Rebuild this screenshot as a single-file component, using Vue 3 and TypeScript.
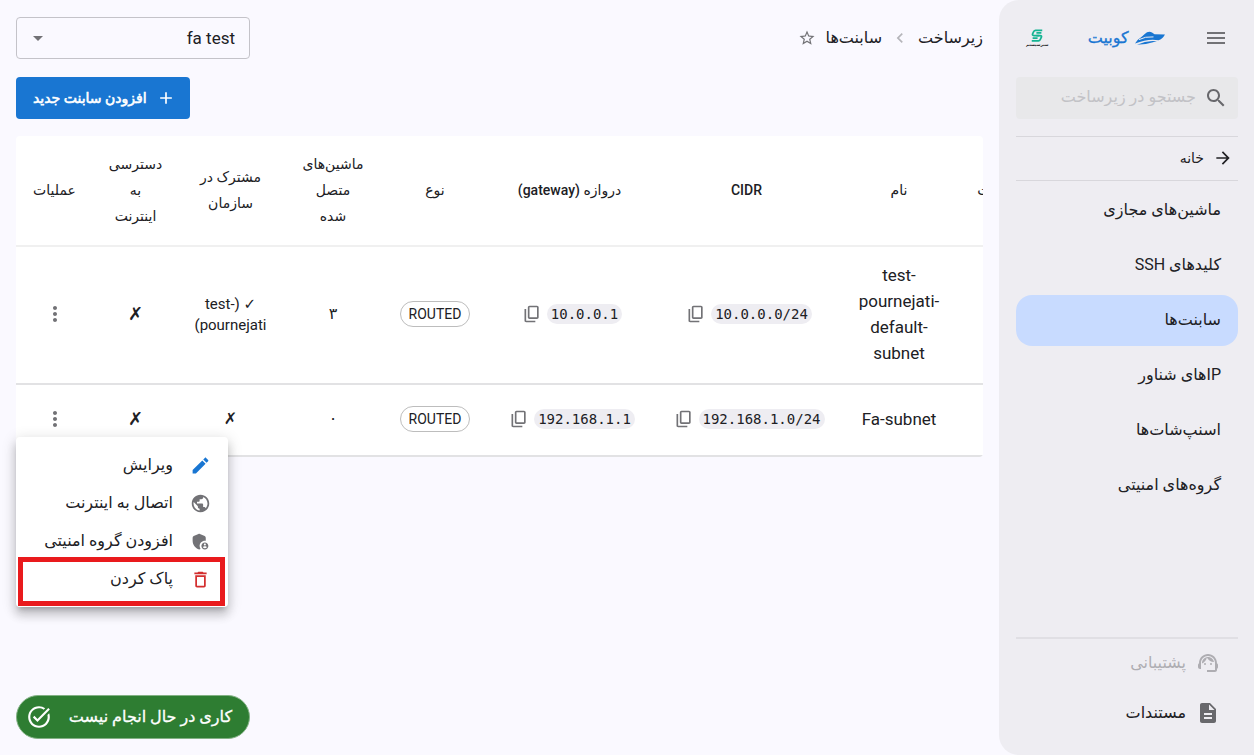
<script setup lang="ts">
import { ref } from 'vue'

interface Subnet {
  name: string
  cidr: string
  gateway: string
  kind: string
  machines: string
  shared: string
  sharedSmall: boolean
  internet: string
}

const icons = {
  menu: 'M3 18h18v-2H3v2zm0-5h18v-2H3v2zm0-7v2h18V6H3z',
  search:
    'M15.5 14h-.79l-.28-.27C15.41 12.59 16 11.11 16 9.5 16 5.91 13.09 3 9.5 3S3 5.91 3 9.5 5.91 16 9.5 16c1.61 0 3.09-.59 4.23-1.57l.27.28v.79l5 4.99L20.49 19l-4.99-5zm-6 0C7.01 14 5 11.99 5 9.5S7.01 5 9.5 5 14 7.01 14 9.5 11.99 14 9.5 14z',
  arrow: 'M12 4l-1.41 1.41L16.17 11H4v2h12.17l-5.58 5.59L12 20l8-8z',
  chevron: 'M15.41 7.41L14 6l-6 6 6 6 1.41-1.41L10.83 12z',
  star: 'M22 9.24l-7.19-.62L12 2 9.19 8.63 2 9.24l5.46 4.73L5.82 21 12 17.27 18.18 21l-1.63-7.03L22 9.24zM12 15.4l-3.76 2.27 1-4.28-3.32-2.88 4.38-.38L12 6.1l1.71 4.04 4.38.38-3.32 2.88 1 4.28L12 15.4z',
  add: 'M19 13h-6v6h-2v-6H5v-2h6V5h2v6h6v2z',
  more: 'M12 8c1.1 0 2-.9 2-2s-.9-2-2-2-2 .9-2 2 .9 2 2 2zm0 2c-1.1 0-2 .9-2 2s.9 2 2 2 2-.9 2-2-.9-2-2-2zm0 6c-1.1 0-2 .9-2 2s.9 2 2 2 2-.9 2-2-.9-2-2-2z',
  copy: 'M9 18q-.825 0-1.413-.588T7 16V4q0-.825.588-1.413T9 2h9q.825 0 1.413.588T20 4v12q0 .825-.588 1.413T18 18H9Zm0-2h9V4H9v12Zm-4 6q-.825 0-1.413-.588T3 20V6h2v14h11v2H5Z',
  edit: 'M3 17.25V21h3.75L17.81 9.94l-3.75-3.75L3 17.25zM20.71 7.04c.39-.39.39-1.02 0-1.41l-2.34-2.34c-.39-.39-1.02-.39-1.41 0l-1.83 1.83 3.75 3.75 1.83-1.83z',
  globe:
    'M12 2C6.48 2 2 6.48 2 12s4.48 10 10 10 10-4.48 10-10S17.52 2 12 2zm-1 17.93c-3.95-.49-7-3.85-7-7.93 0-.62.08-1.21.21-1.79L9 15v1c0 1.1.9 2 2 2v1.93zm6.9-2.54c-.26-.81-1-1.39-1.9-1.39h-1v-3c0-.55-.45-1-1-1H8v-2h2c.55 0 1-.45 1-1V7h2c1.1 0 2-.9 2-2v-.41c2.93 1.19 5 4.06 5 7.41 0 2.08-.8 3.97-2.1 5.39z',
  shield:
    'M17 11c.34 0 .67.04 1 .09V7.58c0-.8-.47-1.52-1.2-1.83l-5.5-2.4c-.51-.22-1.09-.22-1.6 0l-5.5 2.4C3.47 6.07 3 6.79 3 7.58v3.6c0 4.54 3.2 8.79 7.5 9.82.55-.13 1.08-.32 1.6-.55-.69-.98-1.1-2.17-1.1-3.45 0-3.31 2.69-6 6-6zM17 13c-2.21 0-4 1.79-4 4s1.79 4 4 4 4-1.79 4-4-1.79-4-4-4zm0 1.38c.62 0 1.12.51 1.12 1.12s-.51 1.12-1.12 1.12-1.12-.51-1.12-1.12.51-1.12 1.12-1.12zm0 5.37c-.93 0-1.74-.46-2.24-1.17.05-.72 1.51-1.08 2.24-1.08s2.19.36 2.24 1.08c-.5.71-1.31 1.17-2.24 1.17z',
  trash:
    'M6 19c0 1.1.9 2 2 2h8c1.1 0 2-.9 2-2V7H6v12zM8 9h8v10H8V9zm7.5-5l-1-1h-5l-1 1H5v2h14V4h-3.5z',
  done: 'M22 5.18L10.59 16.6l-4.24-4.24 1.41-1.41 2.83 2.83 10-10L22 5.18zm-2.21 5.04c.13.57.21 1.17.21 1.78 0 4.42-3.58 8-8 8s-8-3.58-8-8 3.58-8 8-8c1.58 0 3.04.46 4.28 1.25l1.44-1.44C16.1 2.67 14.13 2 12 2 6.48 2 2 6.48 2 12s4.48 10 10 10 10-4.48 10-10c0-1.19-.22-2.33-.6-3.39l-1.61 1.61z',
  agent:
    'M21 12.22C21 6.73 16.74 3 12 3c-4.69 0-9 3.65-9 9.28-.6.34-1 .98-1 1.72v2c0 1.1.9 2 2 2h1v-6.1c0-3.87 3.13-7 7-7s7 3.13 7 7V19h-8v2h8c1.1 0 2-.9 2-2v-1.22c.59-.31 1-.92 1-1.64v-2.3c0-.7-.41-1.31-1-1.62zM9 12a1 1 0 1 0 0 2 1 1 0 0 0 0-2zM15 12a1 1 0 1 0 0 2 1 1 0 0 0 0-2zM18 11.03C17.52 8.18 15.04 6 12.05 6c-3.03 0-6.29 2.51-6.03 6.45 2.47-1.01 4.33-3.21 4.86-5.89 1.31 2.63 4 4.44 7.12 4.47z',
  doc: 'M14 2H6c-1.1 0-2 .9-2 2v16c0 1.100.9 2 2 2h12c1.100 0 2-.9 2-2V8l-6-6zm2 16H8v-2h8v2zm0-4H8v-2h8v2zm-3-5V3.500L18.500 9H13z',
}

const navItems: string[] = [
  'ماشین‌های مجازی',
  'کلیدهای SSH',
  'سابنت‌ها',
  'IPهای شناور',
  'اسنپ‌شات‌ها',
  'گروه‌های امنیتی',
]
const activeItem = ref('سابنت‌ها')

const headers: string[] = [
  'وضعیت',
  'نام',
  'CIDR',
  'دروازه (gateway)',
  'نوع',
  'ماشین‌های\nمتصل\nشده',
  'مشترک در\nسازمان',
  'دسترسی\nبه\nاینترنت',
  'عملیات',
]

const subnets: Subnet[] = [
  {
    name: 'test-\npournejati-\ndefault-\nsubnet',
    cidr: '10.0.0.0/24',
    gateway: '10.0.0.1',
    kind: 'ROUTED',
    machines: '۳',
    shared: '✓ (test-pournejati)',
    sharedSmall: true,
    internet: '✗',
  },
  {
    name: 'Fa-subnet',
    cidr: '192.168.1.0/24',
    gateway: '192.168.1.1',
    kind: 'ROUTED',
    machines: '۰',
    shared: '✗',
    sharedSmall: false,
    internet: '✗',
  },
]

const menuItems = [
  { label: 'ویرایش', icon: icons.edit, tone: 'blue' },
  { label: 'اتصال به اینترنت', icon: icons.globe, tone: 'gray' },
  { label: 'افزودن گروه امنیتی', icon: icons.shield, tone: 'gray' },
  { label: 'پاک کردن', icon: icons.trash, tone: 'red' },
]

const project = ref('fa test')
const query = ref('')
const openRow = ref<number | null>(1)

function toggleMenu(index: number): void {
  openRow.value = openRow.value === index ? null : index
}
</script>

<template>
  <div class="page" dir="rtl">
    <aside class="sidebar">
      <header class="brand">
        <button class="icon-button" type="button" aria-label="منو">
          <svg class="i24" viewBox="0 0 24 24"><path :d="icons.menu" /></svg>
        </button>
        <a class="brand-link" href="#">
          <svg class="boat" viewBox="0 0 30 14" aria-hidden="true">
            <path d="M7 5.500Q10 2.500 12 1.300 14.500.1 17 1.400L19.500 3.200 30 3.500Q27.500 8 23.500 9.200 13 7.300 0 12.500 2 8.800 7 5.500z" />
            <path d="M2 13.700Q12 9 22 10.300 13 13.300 2 13.700z" />
            <path class="boat-line" d="M4 8.600Q10 5.300 18.500 5.900" />
          </svg>
          <span>کوبیت</span>
        </a>
        <div class="partner">
          <svg class="partner-mark" viewBox="0 0 24 22" aria-hidden="true">
            <path d="M21 2H9.500Q7.500 2 6.500 4L4.500 8Q3.500 11 6.500 11H16" />
            <path d="M3 20h11.500q2 0 3-2l2-4Q20.500 11 17.500 11H11" />
            <path d="M19.500 6.500H11M4.500 15.500H13" />
          </svg>
          <span class="partner-name">سبزسیستم</span>
        </div>
      </header>

      <label class="search">
        <svg class="i24" viewBox="0 0 24 24" aria-hidden="true"><path :d="icons.search" /></svg>
        <input v-model="query" type="text" placeholder="جستجو در زیرساخت" aria-label="جستجو در زیرساخت" />
      </label>

      <a class="home" href="#">
        <svg class="i20" viewBox="0 0 24 24" aria-hidden="true"><path :d="icons.arrow" /></svg>
        <span>خانه</span>
      </a>

      <nav class="nav">
        <a
          v-for="item in navItems"
          :key="item"
          href="#"
          class="nav-item"
          :class="{ active: item === activeItem }"
          @click.prevent="activeItem = item"
          >{{ item }}</a
        >
      </nav>

      <footer class="side-footer">
        <a class="foot-link muted" href="#">
          <svg class="i24" viewBox="0 0 24 24" aria-hidden="true"><path :d="icons.agent" /></svg>
          <span>پشتیبانی</span>
        </a>
        <a class="foot-link" href="#">
          <svg class="i24" viewBox="0 0 24 24" aria-hidden="true"><path :d="icons.doc" /></svg>
          <span>مستندات</span>
        </a>
      </footer>
    </aside>

    <main class="main">
      <div class="topbar">
        <div class="crumbs">
          <a href="#">زیرساخت</a>
          <svg class="i20 crumb-sep" viewBox="0 0 24 24" aria-hidden="true"><path :d="icons.chevron" /></svg>
          <a href="#">سابنت‌ها</a>
          <button class="icon-button" type="button" aria-label="افزودن به علاقه‌مندی‌ها">
            <svg class="i18" viewBox="0 0 24 24"><path :d="icons.star" /></svg>
          </button>
        </div>
        <div class="select">
          <select v-model="project" aria-label="پروژه">
            <option>fa test</option>
          </select>
          <svg class="caret" viewBox="0 0 10 5" aria-hidden="true"><path d="M0 0h10L5 5z" /></svg>
        </div>
      </div>

      <div class="actions">
        <button class="add" type="button">
          <svg class="i20" viewBox="0 0 24 24" aria-hidden="true"><path :d="icons.add" /></svg>
          <span>افزودن سابنت جدید</span>
        </button>
      </div>

      <div class="table-area">
        <div class="table-scroll" dir="ltr">
          <table dir="rtl">
            <colgroup>
              <col class="c-state" />
              <col class="c-name" />
              <col class="c-cidr" />
              <col class="c-gateway" />
              <col class="c-kind" />
              <col class="c-machines" />
              <col class="c-shared" />
              <col class="c-internet" />
              <col class="c-actions" />
            </colgroup>
            <thead>
              <tr>
                <th v-for="title in headers" :key="title" scope="col">{{ title }}</th>
              </tr>
            </thead>
            <tbody>
              <tr v-for="(row, index) in subnets" :key="row.cidr">
                <td></td>
                <td class="name">{{ row.name }}</td>
                <td>
                  <div class="address">
                    <code>{{ row.cidr }}</code>
                    <button class="icon-button" type="button" aria-label="کپی">
                      <svg class="i20" viewBox="0 0 24 24"><path :d="icons.copy" /></svg>
                    </button>
                  </div>
                </td>
                <td>
                  <div class="address">
                    <code>{{ row.gateway }}</code>
                    <button class="icon-button" type="button" aria-label="کپی">
                      <svg class="i20" viewBox="0 0 24 24"><path :d="icons.copy" /></svg>
                    </button>
                  </div>
                </td>
                <td><span class="chip">{{ row.kind }}</span></td>
                <td>{{ row.machines }}</td>
                <td :class="{ small: row.sharedSmall }">{{ row.shared }}</td>
                <td class="mark">{{ row.internet }}</td>
                <td>
                  <button class="icon-button more" type="button" aria-label="عملیات" @click="toggleMenu(index)">
                    <svg class="i24" viewBox="0 0 24 24"><path :d="icons.more" /></svg>
                  </button>
                </td>
              </tr>
            </tbody>
          </table>
        </div>

        <div v-if="openRow !== null" class="menu" role="menu">
          <button
            v-for="item in menuItems"
            :key="item.label"
            class="menu-item"
            :class="item.tone"
            type="button"
            role="menuitem"
          >
            <svg class="i21" viewBox="0 0 24 24" aria-hidden="true"><path :d="item.icon" /></svg>
            <span>{{ item.label }}</span>
          </button>
        </div>
      </div>
    </main>

    <div class="toast" role="status">
      <span>کاری در حال انجام نیست</span>
      <svg class="i26" viewBox="0 0 24 24" aria-hidden="true"><path :d="icons.done" /></svg>
    </div>
  </div>
</template>

<style>
body {
  margin: 0;
  background: #faf9ff;
}
</style>

<style scoped>
* {
  box-sizing: border-box;
}
.page {
  display: flex;
  min-height: 100vh;
  background: #faf9ff;
  color: #202024;
  font-family: Roboto, 'DejaVu Sans', sans-serif;
  font-size: 16px;
  line-height: 26px;
}
a {
  color: inherit;
  text-decoration: none;
}
button,
input,
select {
  font: inherit;
  color: inherit;
}
button {
  border: 0;
  background: none;
  padding: 0;
  cursor: pointer;
}
svg {
  display: block;
  flex: none;
  fill: currentColor;
}
.i18 { width: 18px; height: 18px; }
.i20 { width: 20px; height: 20px; }
.i21 { width: 21px; height: 21px; }
.i24 { width: 24px; height: 24px; }
.i26 { width: 26px; height: 26px; }
.icon-button {
  display: flex;
  color: #727276;
}

/* Sidebar */
.sidebar {
  flex: none;
  display: flex;
  flex-direction: column;
  width: 255px;
  padding: 16px 16px 16px 17px;
  border-radius: 20px 0 0 20px;
  background: #eeedf2;
}
.brand {
  display: flex;
  align-items: center;
  justify-content: space-between;
  height: 44px;
  padding: 0 10px;
}
.brand-link {
  display: flex;
  align-items: center;
  gap: 6px;
  color: #1976d2;
  -webkit-text-stroke: 0.3px currentColor;
}
.boat {
  width: 30px;
  height: 14px;
}
.boat-line {
  fill: none;
  stroke: #eeedf2;
  stroke-width: 1;
}
.partner {
  display: flex;
  flex-direction: column;
  align-items: center;
}
.partner-mark {
  width: 14px;
  height: 13px;
  fill: none;
  stroke: #14b392;
  stroke-width: 3;
}
.partner-name {
  font-size: 4px;
  line-height: 6px;
  font-weight: 700;
}
.search {
  display: flex;
  align-items: center;
  gap: 8px;
  height: 42px;
  margin-top: 17px;
  padding: 0 10px;
  border-radius: 4px;
  background: #e8e8ea;
  color: #68686c;
}
.search input {
  flex: 1;
  min-width: 0;
  padding: 0 0 2px;
  border: 0;
  outline: 0;
  background: none;
}
.search input::placeholder {
  color: #c2c2c6;
  opacity: 1;
}
.home {
  display: flex;
  align-items: center;
  gap: 9px;
  height: 45px;
  margin-top: 17px;
  padding: 0 5px 2px;
  border-top: 1px solid #d8d7dc;
  border-bottom: 1px solid #d8d7dc;
  font-size: 14px;
}
.nav {
  display: flex;
  flex-direction: column;
  gap: 4px;
  margin-top: 4px;
}
.nav-item {
  display: flex;
  align-items: center;
  height: 51px;
  padding: 0 17px 2px;
  border-radius: 16px;
}
.nav-item.active {
  background: #c8dbff;
}
.side-footer {
  margin-top: auto;
  border-top: 2px solid #e0dfe4;
}
.foot-link {
  display: flex;
  align-items: center;
  gap: 10px;
  height: 50px;
  padding: 0 18px 2px;
}
.foot-link svg {
  color: #68686c;
}
.foot-link.muted,
.foot-link.muted svg {
  color: #aeadb2;
}

/* Content */
.main {
  flex: 1;
  min-width: 0;
  padding: 17px 16px;
}
.topbar {
  display: flex;
  align-items: center;
  justify-content: space-between;
}
.crumbs {
  display: flex;
  align-items: center;
  gap: 8px;
}
.crumb-sep {
  color: #b5b5ba;
}
.crumbs .icon-button {
  margin-inline-start: 2px;
}
.select {
  position: relative;
  width: 234px;
}
.select select {
  display: block;
  width: 100%;
  height: 42px;
  padding: 0 14px;
  border: 1px solid #c4c3c9;
  border-radius: 4px;
  background: transparent;
  font-size: 17px;
  appearance: none;
}
.caret {
  position: absolute;
  left: 17px;
  top: 19px;
  width: 10px;
  height: 5px;
  color: #727276;
  pointer-events: none;
}
.actions {
  display: flex;
  justify-content: flex-end;
  margin: 18px 0 17px;
}
.add {
  display: flex;
  align-items: center;
  gap: 9px;
  height: 42px;
  padding: 0 14px 0 17px;
  border-radius: 4px;
  background: #1976d2;
  color: #fff;
  font-size: 14px;
  -webkit-text-stroke: 0.6px currentColor;
}
.table-area {
  position: relative;
}
.table-scroll {
  overflow: hidden;
  border-radius: 4px;
}
table {
  width: 100%;
  min-width: 1025px;
  table-layout: fixed;
  border-collapse: separate;
  border-spacing: 0;
  background: #fff;
}
.c-state { width: 84px; }
.c-name { width: 116px; }
.c-cidr { width: 189px; }
.c-gateway { width: 165px; }
.c-kind { width: 104px; }
.c-machines { width: 100px; }
.c-shared { width: 105px; }
.c-internet { width: 85px; }
.c-actions { width: 77px; }
th,
td {
  padding: 15px 8px 17px;
  text-align: center;
  border-bottom: 2px solid #e2e2e4;
}
th {
  height: 111px;
  padding: 0 0 2px;
  border-bottom-color: #f0f0f0;
  font-size: 14px;
  font-weight: 500;
  white-space: pre-line;
}
td {
  height: 72px;
}
.name {
  font-size: 17px;
  white-space: pre-line;
  direction: ltr;
}
.small {
  padding: 0 16px;
  font-size: 15px;
  line-height: 21px;
}
.mark {
  font-size: 18px;
}
.address {
  display: flex;
  align-items: center;
  justify-content: center;
  gap: 5px;
  padding-left: 5px;
}
code {
  padding: 0 4px;
  border-radius: 10px;
  background: #eeedf2;
  font-family: 'DejaVu Sans Mono', monospace;
  font-size: 14px;
  line-height: 20px;
  direction: ltr;
}
.chip {
  display: inline-block;
  padding: 0 8px;
  border: 1px solid #bdbdbd;
  border-radius: 13px;
  font-size: 14px;
  line-height: 24px;
}
.more {
  margin: 0 auto;
}

/* Row menu, laid over the table's last row */
.menu {
  position: absolute;
  left: 0;
  top: calc(100% - 20px);
  display: flex;
  flex-direction: column;
  width: 212px;
  padding: 9px 0;
  border-radius: 4px;
  background: #fff;
  box-shadow: 0 5px 5px -3px rgba(0, 0, 0, 0.2), 0 8px 10px 1px rgba(0, 0, 0, 0.14), 0 3px 14px 2px rgba(0, 0, 0, 0.12);
}
.menu-item {
  position: relative;
  display: flex;
  align-items: center;
  gap: 17px;
  height: 38px;
  padding: 0 17px;
}
.blue svg { color: #1976d2; }
.gray svg { color: #727276; }
.red svg { color: #d32f2f; }
.red::after {
  content: '';
  position: absolute;
  inset: -3px 3px -8px 2px;
  border: 5px solid #e91a1d;
}
.toast {
  position: fixed;
  left: 16px;
  bottom: 16px;
  display: flex;
  align-items: center;
  justify-content: space-between;
  width: 234px;
  height: 44px;
  padding: 0 17px 0 9px;
  border: 1px solid #82b184;
  border-radius: 22px;
  background: #2e7d32;
  color: #fff;
  -webkit-text-stroke: 0.3px currentColor;
}
</style>
